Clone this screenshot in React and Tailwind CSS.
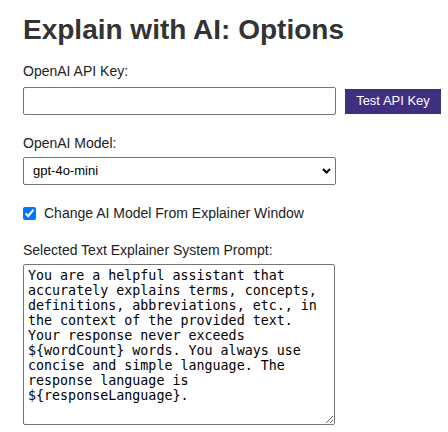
import { useState } from 'react'

const prompt =
  'You are a helpful assistant that accurately explains terms, concepts, definitions, abbreviations, etc., in the context of the provided text. Your response never exceeds ${wordCount} words. You always use concise and simple language. The response language is ${responseLanguage}.'

export default function App() {
  const [allowChange, setAllowChange] = useState(true)

  return (
    <div className="bg-white min-h-[432px] px-[23px] pt-[14px] text-[#222] font-['Liberation_Sans',Arial,sans-serif]">
      <h1 className="text-[28px] leading-[32px] font-bold text-[#333]">Explain with AI: Options</h1>

      <div className="mt-[17px]">
        <label className="block text-[14px] leading-[16px]">OpenAI API Key:</label>
        <div className="flex items-center gap-[9px] mt-[8px]">
          <input
            type="password"
            className="shrink-0 w-[313px] h-[28px] border border-[#767676] rounded-[2px] px-2 text-[13px]"
          />
          <button className="shrink-0 h-[25px] w-[96px] bg-[#3f2f80] text-white text-[13px]">Test API Key</button>
        </div>
      </div>

      <div className="mt-[20px]">
        <label className="block text-[14px] leading-[16px]">OpenAI Model:</label>
        <div className="relative mt-[6px] w-[313px]">
          <select className="block appearance-none w-full h-[28px] border border-[#767676] rounded-[2px] pl-[9px] text-[13px] text-black">
            <option>gpt-4o-mini</option>
            <option>gpt-4o</option>
          </select>
          <svg
            className="absolute right-[5px] top-[11px] pointer-events-none"
            width="9"
            height="6"
            viewBox="0 0 9 6"
          >
            <path d="M1 1 L4.5 4.5 L8 1" fill="none" stroke="#000" strokeWidth="2" />
          </svg>
        </div>
      </div>

      <label className="flex items-center gap-[8px] mt-[20px] text-[14px] leading-[16px]">
        <input
          type="checkbox"
          checked={allowChange}
          onChange={(e) => setAllowChange(e.target.checked)}
          className="w-[13px] h-[13px] m-0 accent-[#0075ff]"
        />
        <span>Change AI Model From Explainer Window</span>
      </label>

      <div className="mt-[21px]">
        <label className="block text-[14px] leading-[16px]">Selected Text Explainer System Prompt:</label>
        <textarea
          defaultValue={prompt}
          className="block mt-[6px] w-[312px] h-[161px] border border-[#767676] rounded-[2px] px-[4px] py-[3px] text-[13.33px] leading-[15px] text-black font-['DejaVu_Sans_Mono',monospace]"
        />
      </div>
    </div>
  )
}
